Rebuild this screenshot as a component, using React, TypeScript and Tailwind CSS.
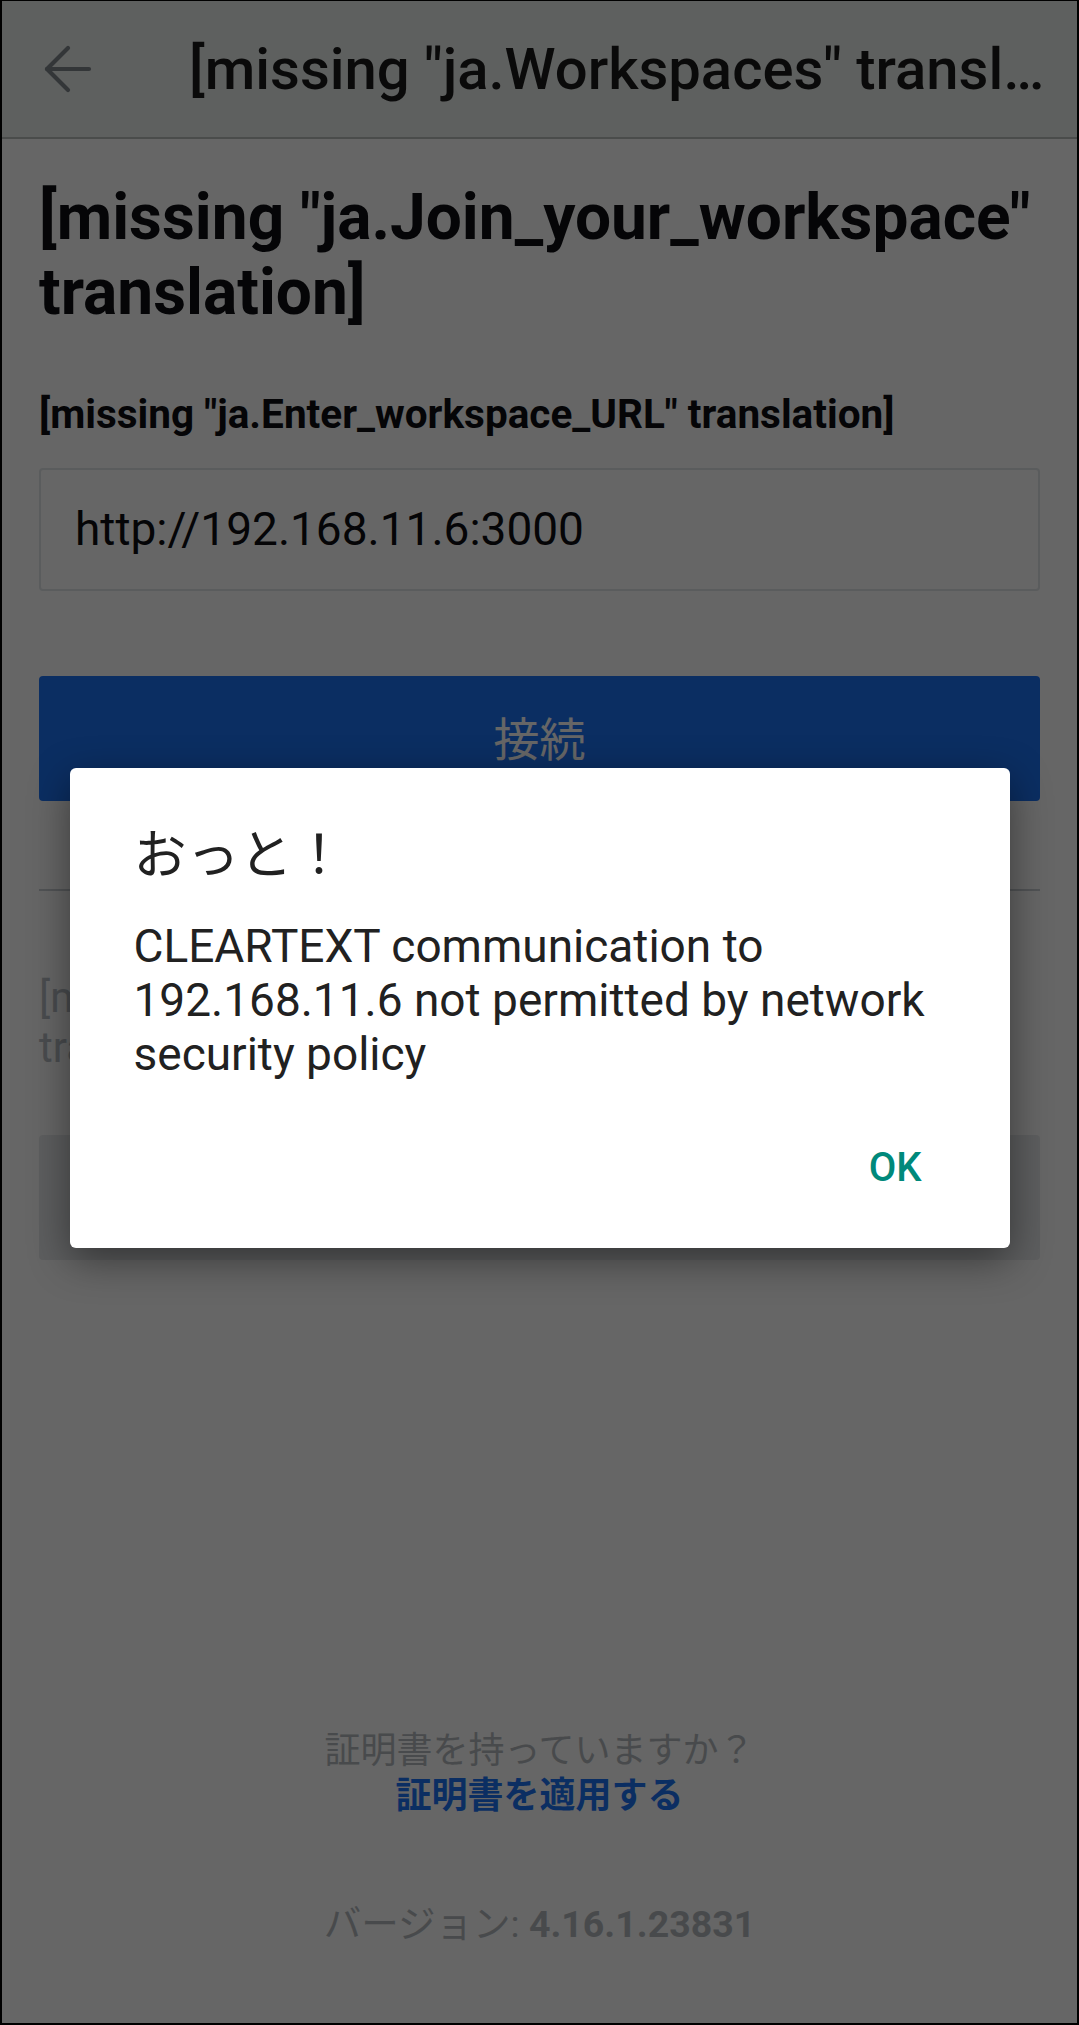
import { ArrowLeft } from 'lucide-react';

const font = { fontFamily: 'Roboto, "Noto Sans CJK JP", sans-serif' };

function Header() {
  return (
    <div className="flex h-[138px] items-center border-b-2 border-[#b9bdbc] bg-[#ebefed]">
      <div className="pl-[30px]">
        <ArrowLeft size={72} strokeWidth={1.4} className="text-[#7f878d]" />
      </div>
      <div className="ml-[85px] min-w-0 flex-1 truncate pr-[24px] text-[58px] font-medium text-[#1a1a1a]">
        [missing "ja.Workspaces" translation]
      </div>
    </div>
  );
}

function AlertDialog() {
  return (
    <div className="w-[940px] rounded-[6px] bg-white pt-[57px] pl-[64px] pr-[64px] pb-[32px] shadow-[0_12px_40px_rgba(0,0,0,0.45)]">
      <h2 className="text-[53px] leading-[62px] text-[#212121]">おっと！</h2>
      <p className="mt-[32px] text-[46px] leading-[54px] text-[#212121]">
        CLEARTEXT communication to 192.168.11.6 not permitted by network security policy
      </p>
      <div className="mt-[39px] flex justify-end">
        <button className="h-[96px] px-[24px] text-[40px] font-medium text-[#00897b]">
          OK
        </button>
      </div>
    </div>
  );
}

export default function App() {
  return (
    <div
      className="h-[2025px] w-[1079px] overflow-hidden border-x-2 border-t border-b-2 border-black"
      style={font}
    >
      <div className="relative flex h-full flex-col bg-white">
        <Header />
        <div className="flex flex-1 flex-col px-[37px]">
          <h1 className="mt-[41px] text-[64px] font-bold leading-[75px] text-[#0d0e12]">
            [missing "ja.Join_your_workspace" translation]
          </h1>
          <p className="mt-[60px] text-[40.5px] font-bold leading-[48px] text-[#0d0e12]">
            [missing "ja.Enter_workspace_URL" translation]
          </p>
          <div className="mt-[30px] flex h-[123px] items-center rounded-[4px] border-2 border-[#e1e5e8] px-[34px] text-[46px] text-[#0d0e12]">
            http://192.168.11.6:3000
          </div>
          <button className="mt-[85px] h-[125px] rounded-[4px] bg-[#1d74f5] pt-[4px] text-[46px] text-white">
            接続
          </button>
          <div className="mt-[88px] h-[2px] bg-[#cbd0d4]" />
          <p className="mt-[82px] text-[42px] leading-[50px] text-[#b8bfc6]">
            [missing "ja.Onboarding_join_open_description" translation]
          </p>
          <button className="mt-[62px] flex h-[125px] items-center justify-center rounded-[4px] bg-[#e9ebed] px-[20px] text-[46px] font-medium leading-[50px] text-[#1f2329]">
            [missing "ja.Join_our_open_workspace" translation]
          </button>
          <div className="mt-auto flex flex-col items-center pb-[77px]">
            <p className="text-[36px] leading-[45px] text-[#b5babe]">証明書を持っていますか？</p>
            <p className="text-[36px] font-bold leading-[45px] text-[#1d74f5]">証明書を適用する</p>
            <p className="mt-[83px] text-[37.5px] leading-[44px] text-[#b5babe]">
              バージョン: <span className="font-bold">4.16.1.23831</span>
            </p>
          </div>
        </div>
        <div className="absolute inset-0 flex items-center justify-center bg-black/60 pb-[8px]">
          <AlertDialog />
        </div>
      </div>
    </div>
  );
}
